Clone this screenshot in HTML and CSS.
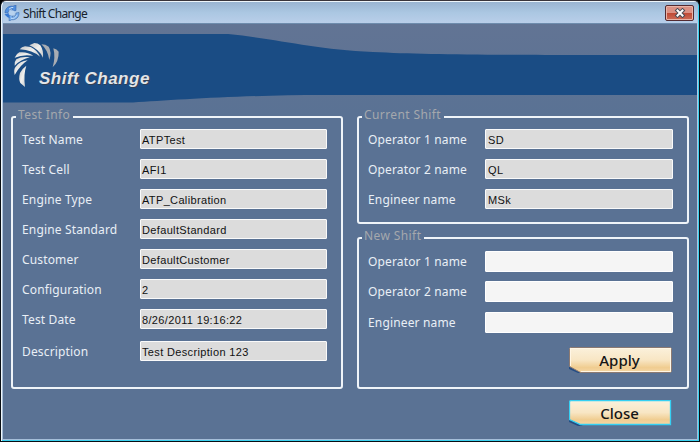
FILE: index.html
```
<!DOCTYPE html>
<html lang="en">
<head>
<meta charset="utf-8">
<title>Shift Change</title>
<link rel="stylesheet" href="styles.css">
</head>
<body>
<div class="window">
  <header class="titlebar">
    <svg class="app-icon" width="16" height="16" viewBox="0 0 16 16">
      <circle cx="8" cy="8" r="6.8" fill="#a9c7e8"/>
      <path d="M1 8C1 3 5 .5 9 1.2L12 0v5.5L7.5 6 9 4C6 3.4 4.4 5 4.2 7.4z" fill="#4d8ee0" stroke="#3565ad" stroke-width=".6"/>
      <path d="M15 7.5c.3 4.5-3 7.7-7.3 7.2L5.2 16 5 10.3l4.300-.4L8 12c2.400.2 4-1.500 4-4z" fill="#78aeee" stroke="#3e69a6" stroke-width=".6"/>
      <path d="M.5 9.500l4-1.500 1.300 5-2.200-.8z" fill="#3476d2"/>
      <circle cx="8" cy="8" r="2.700" fill="#b8d2ee"/>
      <path d="M5 4.200Q7 2.100 9.300 2.400M7 13.300q4 .7 5.800-3" fill="none" stroke="#c5e0fb"/>
    </svg>
    <span class="title">Shift Change</span>
    <button class="close-x" aria-label="Close window">
      <svg width="12" height="10" viewBox="0 0 12 10"><path d="M3.500 2.500l5 5M8.500 2.500l-5 5" stroke="#4b4c55" stroke-width="4" stroke-linecap="square"/><path d="M3.500 2.500l5 5M8.500 2.500l-5 5" stroke="#fff" stroke-width="2" stroke-linecap="square"/></svg>
    </button>
  </header>
  <main class="client">
    <div class="banner">
      <svg class="wave" width="694" height="80" viewBox="0 0 694 80">
        <path d="M0 10H225C275 15 310 25 370 28C430 31 500 31 694 31V71H320C240 71 170 76 130 78.500H0z" fill="#1a4c84"/>
      </svg>
      <svg class="swirl" width="50" height="48" viewBox="0 0 150 144">
        <defs><linearGradient id="metal" x2="1" y2="1"><stop stop-color="#c3c5c8"/><stop offset=".5" stop-color="#f2f1ee"/><stop offset="1" stop-color="#c4c6c8"/></linearGradient></defs>
        <g transform="translate(-30 -36)" fill="url(#metal)">
          <path d="M82 43L97 36Q107 36 115 43Q125 58 123 80Q110 54 82 43z"/>
          <path d="M53 55Q59 47 69 46L86 48Q105 57 114 77Q92 58 53 55z"/>
          <path d="M38 80Q42 69 52 64Q75 61 94 74Q62 69 38 80z"/>
          <path d="M38 104Q37 91 43 85Q59 75 84 79Q58 84 38 104z"/>
          <path d="M38 132Q34 115 41 107Q53 91 77 88Q54 103 38 132z"/>
          <path d="M69 168L55 156Q49 144 54 126Q60 113 73 104Q64 130 69 168z"/>
        </g>
        <g transform="translate(-30 -36)" fill="#a9adb3"><path d="M118 40Q131 40 140 47Q150 62 142 87Q137 56 118 40z"/><path d="M154 52Q165 54 170 62Q171 91 152 109Q161 79 154 52z"/></g>
      </svg>
      <h1 class="banner-title">Shift Change</h1>
    </div>
    <div class="panels">
      <fieldset class="group info">
        <legend>Test Info</legend>
        <div class="row"><label>Test Name</label><div class="field">ATPTest</div></div>
        <div class="row"><label>Test Cell</label><div class="field">AFI1</div></div>
        <div class="row"><label>Engine Type</label><div class="field">ATP_Calibration</div></div>
        <div class="row"><label>Engine Standard</label><div class="field">DefaultStandard</div></div>
        <div class="row"><label>Customer</label><div class="field">DefaultCustomer</div></div>
        <div class="row"><label>Configuration</label><div class="field">2</div></div>
        <div class="row"><label>Test Date</label><div class="field">8/26/2011 19:16:22</div></div>
        <div class="row last"><label>Description</label><div class="field">Test Description 123</div></div>
      </fieldset>
      <div class="shifts">
        <fieldset class="group current">
          <legend>Current Shift</legend>
          <div class="row"><label>Operator 1 name</label><div class="field">SD</div></div>
          <div class="row"><label>Operator 2 name</label><div class="field">QL</div></div>
          <div class="row"><label>Engineer name</label><div class="field">MSk</div></div>
        </fieldset>
        <fieldset class="group new">
          <legend>New Shift</legend>
          <div class="row"><label>Operator 1 name</label><input class="field"></div>
          <div class="row"><label>Operator 2 name</label><input class="field"></div>
          <div class="row"><label>Engineer name</label><input class="field"></div>
          <button class="action apply">
            <svg class="plate" width="103" height="26" viewBox="0 0 103 26"><defs><linearGradient id="cream" x2="0" y2="1"><stop stop-color="#fbf1dc"/><stop offset=".5" stop-color="#f8e6c4"/><stop offset=".8" stop-color="#f0cd91"/><stop offset="1" stop-color="#f5d6a4"/></linearGradient></defs><path d="M0 19v3l9 4h5z" fill="#244d84"/><path d="M1.500.500H101.500L102.500 1.500V24.500L101.500 25.500H11.500L.500 19.500V1.500z" fill="url(#cream)" stroke="#8c7a72"/><path d="M1.500 19V1.500H101.500V24.500H12" fill="none" stroke="#fff6e5"/></svg>
            <span>Apply</span>
          </button>
        </fieldset>
      </div>
    </div>
    <footer class="footer">
      <button class="action">
        <svg class="plate" width="103" height="26" viewBox="0 0 103 26"><path d="M0 19v3l9 4h5z" fill="#244d84"/><path d="M1.500.500H101.500V24.500H11.500L.500 19.500V1.500z" fill="url(#cream)" stroke="#35d0f3" stroke-width="1.300"/></svg>
        <span>Close</span>
      </button>
    </footer>
  </main>
</div>
</body>
</html>
```
FILE: styles.css
```
* { box-sizing: border-box; }
html, body { margin: 0; height: 100%; overflow: hidden; background: #000; }
body { font-family: "Noto Sans", sans-serif; }
button { border: 0; padding: 0; background: none; font: inherit; }
.window {
  width: 700px; height: 442px; padding: 1px 2px 2px 2px;
  border: 1px solid #080e14; border-top-color: #39343a; border-radius: 6px 6px 0 0;
  background: linear-gradient(#9db6d3, #b6cde8 23px, #a5bdd8);
  box-shadow: inset 1px 1px #eef5fa, inset -1px -1px #3ad0ee;
  display: flex; flex-direction: column;
}
.titlebar { height: 22px; flex: none; display: flex; align-items: center; padding: 0 3px 0 1px; background: linear-gradient(#9ab4d1, #abc7e2 50%, #b9cee9); border-bottom: 1px solid #6e8cad; }
.app-icon { flex: none; }
.title { position: relative; top: 1px; margin-left: 3px; font-size: 12px; line-height: 18px; letter-spacing: -.65px; color: #16212c; }
.close-x { margin-left: auto; width: 29px; height: 16px; border: 1px solid #542a30; border-radius: 2px; box-shadow: inset 0 0 0 1px #e9b4a8; background: linear-gradient(#dc9184 50%, #bf4935 51%, #cc6c57); display: flex; align-items: center; justify-content: center; }
.client { flex: 1; min-height: 0; background: linear-gradient(#627494, #5a7294 90px); }
.banner { height: 80px; position: relative; }
.wave { display: block; }
.swirl { position: absolute; left: 9px; top: 19px; }
.banner-title { position: absolute; left: 36px; top: 46px; margin: 0; font: italic bold 17px/18px "Liberation Sans", sans-serif; letter-spacing: .5px; color: #e3e5e8; text-shadow: 1px 1px #343f53; white-space: nowrap; }
.panels { display: flex; gap: 14px; padding: 5px 0 0 8px; }
.group { margin: 0; min-width: 0; width: 332px; padding: 0 14px 0 9px; border: 2px solid #eff4f9; border-radius: 3px; }
.info { height: 280px; }
.current { height: 115px; }
.new { height: 159px; margin-top: 6px; }
legend { margin-left: -6px; padding: 0 3px 4px 2px; height: 16px; font-size: 12px; line-height: 12px; letter-spacing: .4px; color: #a5a8ad; }
.row { height: 20px; margin-bottom: 10px; display: flex; align-items: center; justify-content: space-between; }
.info .row:first-of-type, .current .row:first-of-type { margin-top: 4px; }
.new .row:first-of-type { margin-top: 5px; }
.new .row:nth-of-type(3) { margin-top: 11px; }
.info .last { margin-top: 12px; }
.row label { font-size: 12px; line-height: 18px; padding-top: 2px; letter-spacing: .15px; color: #e9eff6; white-space: nowrap; }
.field { width: 187px; height: 20px; border: 1px solid #fafafa; border-radius: 1px; outline: 0; background: #dcdcdc; padding: 1px 1px 0; font: 11px/18px "Liberation Sans", sans-serif; letter-spacing: .35px; color: #111; white-space: nowrap; }
.current .field { width: 188px; padding-left: 2px; }
.new .field { width: 188px; height: 21px; background: #f5f5f5; border-color: #fff; }
.action { display: block; position: relative; width: 103px; height: 26px; font-size: 15px; line-height: 23px; font-weight: 500; color: #151515; letter-spacing: 0; }
.action span { position: relative; left: -1px; }
.plate { position: absolute; inset: 0; }
.apply { margin: 15px 1px 0 auto; }
.footer { padding: 11px 25px 0 0; display: flex; justify-content: flex-end; }
```
